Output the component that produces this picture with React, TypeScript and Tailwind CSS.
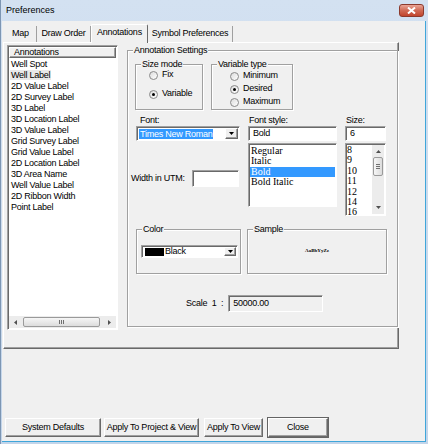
import React from 'react'

const sunken = 'border border-t-[#a0a0a0] border-l-[#a0a0a0] border-r-white border-b-white shadow-[inset_1px_1px_0_#696969]'
const raised = 'border border-t-white border-l-white border-r-[#696969] border-b-[#696969] shadow-[inset_-1px_-1px_0_#a0a0a0]'

function Group({ label, className, children }: { label: string; className: string; children?: React.ReactNode }) {
  return (
    <fieldset className={`border border-[#a0a0a0] shadow-[1px_1px_0_#fff,inset_1px_1px_0_#fff] ${className}`}>
      <legend className="ml-[5px] px-[1px] leading-[11px] bg-[#f0f0f0]">{label}</legend>
      {children}
    </fieldset>
  )
}

function Radio({ label, checked }: { label: string; checked?: boolean }) {
  return (
    <div className="flex items-center h-[10px]">
      <span className="w-[9px] h-[9px] rounded-full border border-[#8a8a8a] bg-gradient-to-br from-[#dcdcdc] to-white flex items-center justify-center">
        {checked && <span className="w-[3px] h-[3px] rounded-full bg-black" />}
      </span>
      <span className="ml-[4px]">{label}</span>
    </div>
  )
}

function DownBtn({ className = '' }: { className?: string }) {
  return (
    <div className={`bg-[#f0f0f0] ${raised} flex items-center justify-center ${className}`}>
      <svg width="5" height="3" viewBox="0 0 5 3"><path d="M0 0h5L2.5 3z" fill="#000" /></svg>
    </div>
  )
}

const annotations = [
  'Well Spot', 'Well Label', '2D Value Label', '2D Survey Label', '3D Label', '3D Location Label',
  '3D Value Label', 'Grid Survey Label', 'Grid Value Label', '2D Location Label', '3D Area Name',
  'Well Value Label', '2D Ribbon Width', 'Point Label',
]

const tabs = [
  { label: 'Map', w: 'w-[32px]' },
  { label: 'Draw Order', w: 'w-[54px]' },
  { label: 'Annotations', w: 'w-[57px]', active: true },
  { label: 'Symbol Preferences', w: 'w-[85px]' },
]

export default function App() {
  return (
    <div className="w-[428px] h-[444px] flex flex-col bg-gradient-to-b from-[#d3e1f1] to-[#c3d5ea] border-l border-[#7d96b3] font-['Liberation_Sans',Arial,sans-serif] text-[9px] tracking-[-0.25px] text-black select-none">
      {/* title bar */}
      <div className="h-[21px] flex justify-between">
        <div className="pl-[5px] pt-[5px] text-[9px] tracking-normal leading-[11px]">Preferences</div>
        <div className="mt-[4px] mr-[4px] w-[25px] h-[13px] rounded-[3px] border border-[#8c3a2d] bg-gradient-to-b from-[#e9a496] via-[#d06a55] to-[#c1442c] flex items-center justify-center">
          <svg width="9" height="7" viewBox="0 0 9 7"><path d="M1 0.5l7 6M8 0.5l-7 6" stroke="#fff" strokeWidth="2" /></svg>
        </div>
      </div>

      {/* client area */}
      <div className="flex-1 ml-[1px] mr-[2px] mb-[2px] bg-[#f0f0f0] flex flex-col border-r border-b border-[#3fa6da]">
        {/* tabs */}
        <div className="pt-[3px] pl-[3px] h-[21px] flex items-end">
          {tabs.map(t => (
            <div
              key={t.label}
              className={`${t.w} flex items-center justify-center border-r ${t.active ? 'h-[19px] -mb-px z-10 relative bg-[#f0f0f0] border-t border-l border-t-white border-l-white border-r-[#696969] rounded-t-[2px]' : 'h-[16px] border-r-[#a0a0a0]'}`}
            >
              <span className={t.active ? 'mb-[2px]' : ''}>{t.label}</span>
            </div>
          ))}
        </div>

        {/* tab panel */}
        <div className="ml-[1px] w-[396px] h-[307px] border border-t-white border-l-white border-r-[#696969] border-b-[#696969] shadow-[inset_-1px_-1px_0_#a0a0a0] flex items-start">
          {/* annotation list */}
          <div className={`ml-[3px] mt-[2px] w-[111px] h-[285px] bg-white p-[1px] flex flex-col ${sunken}`}>
            <div className={`h-[11px] bg-[#f0f0f0] pl-[4px] leading-[9px] ${raised}`}>Annotations</div>
            <div className="flex-1 pt-[1px] pl-[1px]">
              {annotations.map(a => (
                <div key={a} className="leading-[11px] h-[11px]">
                  <span className={`px-[1px] ${a === 'Well Label' ? 'bg-[#e8e8e8]' : ''}`}>{a}</span>
                </div>
              ))}
            </div>
            <div className="h-[12px] bg-[#ececec] flex items-center">
              <div className="w-[13px] flex justify-center">
                <svg width="3" height="5" viewBox="0 0 3 5"><path d="M3 0v5L0 2.5z" fill="#505050" /></svg>
              </div>
              <div className="flex-1 h-full py-[1px]">
                <div className="ml-[1px] w-[77px] h-full rounded-[2px] border border-[#9a9a9a] bg-gradient-to-b from-[#f6f6f6] to-[#dcdcdc] flex items-center justify-center gap-[1px]">
                  <span className="w-px h-[4px] bg-[#707070]" />
                  <span className="w-px h-[4px] bg-[#707070]" />
                  <span className="w-px h-[4px] bg-[#707070]" />
                </div>
              </div>
              <div className="w-[13px] flex justify-center">
                <svg width="3" height="5" viewBox="0 0 3 5"><path d="M0 0v5L3 2.5z" fill="#505050" /></svg>
              </div>
            </div>
          </div>

          {/* annotation settings */}
          <Group label="Annotation Settings" className="ml-[9px] mt-[2px] w-[271px] h-[282px] flex-none">
            <div className="flex mt-[3px]">
              <Group label="Size mode" className="ml-[7px] w-[68px] h-[51px]">
                <div className="pl-[13px]">
                  <Radio label="Fix" />
                  <div className="mt-[9px]"><Radio label="Variable" checked /></div>
                </div>
              </Group>
              <Group label="Variable type" className="ml-[8px] w-[82px] h-[51px]">
                <div className="pl-[18px] pt-[1px] flex flex-col gap-[3px]">
                  <Radio label="Minimum" />
                  <Radio label="Desired" checked />
                  <Radio label="Maximum" />
                </div>
              </Group>
            </div>

            <div className="flex mt-[5px]">
              {/* font column */}
              <div className="ml-[3px] w-[109px]">
                <div className="pl-[9px] leading-[11px] h-[11px]">Font:</div>
                <div className={`ml-[5px] w-[104px] h-[15px] bg-white flex items-center p-[1px] ${sunken}`}>
                  <span className="ml-[1px] px-[1px] bg-[#3399ff] text-white leading-[10px]">Times New Roman</span>
                  <span className="flex-1" />
                  <DownBtn className="w-[13px] h-full" />
                </div>
                <div className="mt-[29px] flex items-center justify-between pr-[1px]">
                  <span className="leading-[11px]">Width in UTM:</span>
                  <div className={`w-[47px] h-[17px] bg-white ${sunken}`} />
                </div>
              </div>
              {/* style column */}
              <div className="ml-[8px] w-[89px]">
                <div className="pl-[1px] leading-[11px] h-[11px]">Font style:</div>
                <div className={`h-[15px] bg-white pl-[4px] leading-[13px] ${sunken}`}>Bold</div>
                <div className={`mt-[2px] h-[64px] bg-white p-[1px] pt-[2px] font-['Liberation_Serif',serif] text-[10px] tracking-normal ${sunken}`}>
                  <div className="leading-[10.3px] pl-[1px]">Regular</div>
                  <div className="leading-[10.3px] pl-[1px]">Italic</div>
                  <div className="leading-[10.3px] pl-[1px] bg-[#3399ff] text-white">Bold</div>
                  <div className="leading-[10.3px] pl-[1px]">Bold Italic</div>
                </div>
              </div>
              {/* size column */}
              <div className="ml-[8px] w-[41px]">
                <div className="pl-[1px] leading-[11px] h-[11px]">Size:</div>
                <div className={`h-[15px] bg-white pl-[4px] leading-[13px] ${sunken}`}>6</div>
                <div className={`mt-[2px] h-[73px] bg-white p-[1px] flex ${sunken}`}>
                  <div className="flex-1 font-['Liberation_Serif',serif] text-[10px] tracking-normal">
                    {['8', '9', '10', '11', '12', '14', '16'].map(s => (
                      <div key={s} className="leading-[10.4px]">{s}</div>
                    ))}
                  </div>
                  <div className="w-[12px] bg-[#ececec] flex flex-col items-center">
                    <svg className="mt-[5px]" width="5" height="3" viewBox="0 0 5 3"><path d="M0 3h5L2.5 0z" fill="#505050" /></svg>
                    <div className="mt-[4px] w-[10px] h-[19px] rounded-[2px] border border-[#9a9a9a] bg-gradient-to-r from-[#f6f6f6] to-[#dcdcdc] flex flex-col items-center justify-center gap-[1px]">
                      <span className="w-[4px] h-px bg-[#707070]" />
                      <span className="w-[4px] h-px bg-[#707070]" />
                      <span className="w-[4px] h-px bg-[#707070]" />
                    </div>
                    <span className="flex-1" />
                    <svg className="mb-[5px]" width="5" height="3" viewBox="0 0 5 3"><path d="M0 0h5L2.5 3z" fill="#505050" /></svg>
                  </div>
                </div>
              </div>
            </div>

            <div className="flex mt-[8px]">
              <Group label="Color" className="ml-[8px] w-[105px] h-[50px]">
                <div className={`ml-[4px] mt-[10px] w-[97px] h-[13px] bg-white flex items-center p-[1px] ${sunken}`}>
                  <span className="ml-[2px] w-[19px] h-[8px] bg-black" />
                  <span className="ml-[1px] leading-[9px]">Black</span>
                  <span className="flex-1" />
                  <DownBtn className="w-[12px] h-full" />
                </div>
              </Group>
              <Group label="Sample" className="ml-[6px] w-[140px] h-[50px]">
                <div className="mt-[13px] text-center font-['Liberation_Serif',serif] font-bold text-[5px] tracking-normal leading-[6px]">AaBbYyZz</div>
              </Group>
            </div>

            <div className="flex items-center mt-[21px] ml-[58px]">
              <span>Scale&nbsp; 1&nbsp; :</span>
              <div className={`ml-[5px] w-[95px] h-[17px] bg-[#f0f0f0] pl-[4px] leading-[15px] ${sunken}`}>50000.00</div>
            </div>
          </Group>
        </div>

        <div className="flex-1" />

        {/* buttons */}
        <div className="flex pl-[3px] mb-[4px] h-[19px] items-stretch">
          <button className={`w-[96px] bg-[#f0f0f0] ${raised}`}>System Defaults</button>
          <button className={`ml-[3px] w-[95px] bg-[#f0f0f0] ${raised}`}>Apply To Project &amp; View</button>
          <button className={`ml-[5px] w-[59px] bg-[#f0f0f0] ${raised}`}>Apply To View</button>
          <button className={`ml-[5px] w-[60px] bg-[#f0f0f0] ${raised} outline outline-1 outline-[#646464]`}>Close</button>
        </div>
      </div>
    </div>
  )
}
